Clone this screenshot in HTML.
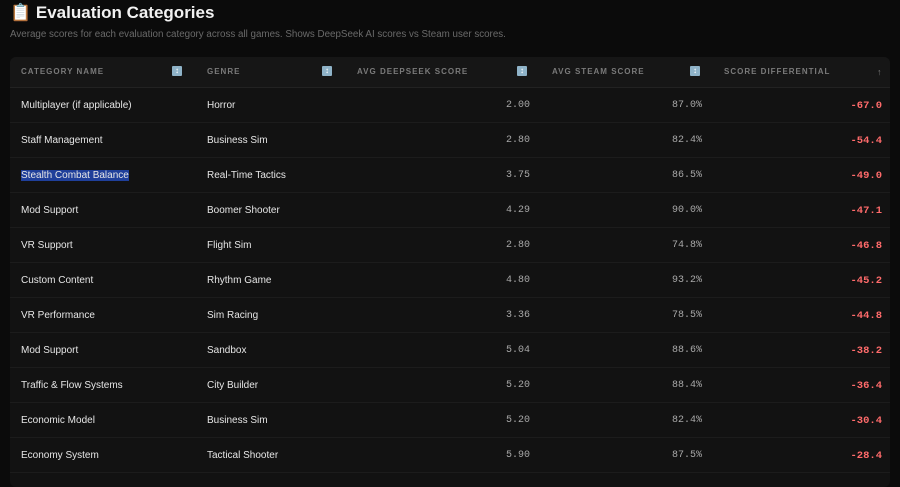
<!DOCTYPE html>
<html><head><style>
body{margin:0;background:#0b0b0b;width:900px;height:474px;overflow:hidden;font-family:"Liberation Sans",sans-serif;color:#e6e6e6}
h1{position:absolute;left:10px;top:0;margin:0;font-size:17px;line-height:25px;font-weight:bold;color:#f2f2f2}
.sub{position:absolute;left:10px;top:29px;font-size:9.8px;color:#6a6a6a}
.tbl{position:absolute;left:10px;top:57px;width:880px;height:430px;background:#121212;border-radius:6px;overflow:hidden}
.hd{position:absolute;left:0;top:0;width:880px;height:30px;background:#161616;border-bottom:1px solid #222}
.hd span{position:absolute;top:10px;font-size:8px;letter-spacing:1px;color:#7a7a7a;font-weight:bold}
.ic{position:absolute;top:9px;width:10px;height:10px;background:#8fb3c8;border-radius:1px;color:#fff;font-size:8px;line-height:10px;text-align:center}
.row{position:absolute;left:0;width:880px;height:35px;border-bottom:1px solid #1c1c1c;font-size:10px}
.row div{position:absolute;top:13px}
.m{font-family:"Liberation Mono",monospace;color:#a8a8a8;font-size:10px}
.r{font-family:"Liberation Mono",monospace;color:#ff6b6b;font-weight:bold;font-size:10.5px}
.sel{background:#1f3f9a}
</style></head><body>
<h1>📋 Evaluation Categories</h1>
<div class="sub">Average scores for each evaluation category across all games. Shows DeepSeek AI scores vs Steam user scores.</div>
<div class="tbl">
<div class="hd">
<span style="left:11px">CATEGORY NAME</span><div class="ic" style="left:162px">↕</div>
<span style="left:197px">GENRE</span><div class="ic" style="left:312px">↕</div>
<span style="left:347px">AVG DEEPSEEK SCORE</span><div class="ic" style="left:507px">↕</div>
<span style="left:542px">AVG STEAM SCORE</span><div class="ic" style="left:680px">↕</div>
<span style="left:714px">SCORE DIFFERENTIAL</span><span style="left:867px;font-size:9px">↑</span>
</div>
</div>
<div style="position:absolute;left:10px;top:87px">
<div class="row" style="top:0"><div style="left:11px">Multiplayer (if applicable)</div><div style="left:197px">Horror</div><div class="m" style="right:360px">2.00</div><div class="m" style="right:188px">87.0%</div><div class="r" style="right:8px">-67.0</div></div>
<div class="row" style="top:35px"><div style="left:11px">Staff Management</div><div style="left:197px">Business Sim</div><div class="m" style="right:360px">2.80</div><div class="m" style="right:188px">82.4%</div><div class="r" style="right:8px">-54.4</div></div>
<div class="row" style="top:70px"><div style="left:11px" class="sel">Stealth Combat Balance</div><div style="left:197px">Real-Time Tactics</div><div class="m" style="right:360px">3.75</div><div class="m" style="right:188px">86.5%</div><div class="r" style="right:8px">-49.0</div></div>
<div class="row" style="top:105px"><div style="left:11px">Mod Support</div><div style="left:197px">Boomer Shooter</div><div class="m" style="right:360px">4.29</div><div class="m" style="right:188px">90.0%</div><div class="r" style="right:8px">-47.1</div></div>
<div class="row" style="top:140px"><div style="left:11px">VR Support</div><div style="left:197px">Flight Sim</div><div class="m" style="right:360px">2.80</div><div class="m" style="right:188px">74.8%</div><div class="r" style="right:8px">-46.8</div></div>
<div class="row" style="top:175px"><div style="left:11px">Custom Content</div><div style="left:197px">Rhythm Game</div><div class="m" style="right:360px">4.80</div><div class="m" style="right:188px">93.2%</div><div class="r" style="right:8px">-45.2</div></div>
<div class="row" style="top:210px"><div style="left:11px">VR Performance</div><div style="left:197px">Sim Racing</div><div class="m" style="right:360px">3.36</div><div class="m" style="right:188px">78.5%</div><div class="r" style="right:8px">-44.8</div></div>
<div class="row" style="top:245px"><div style="left:11px">Mod Support</div><div style="left:197px">Sandbox</div><div class="m" style="right:360px">5.04</div><div class="m" style="right:188px">88.6%</div><div class="r" style="right:8px">-38.2</div></div>
<div class="row" style="top:280px"><div style="left:11px">Traffic &amp; Flow Systems</div><div style="left:197px">City Builder</div><div class="m" style="right:360px">5.20</div><div class="m" style="right:188px">88.4%</div><div class="r" style="right:8px">-36.4</div></div>
<div class="row" style="top:315px"><div style="left:11px">Economic Model</div><div style="left:197px">Business Sim</div><div class="m" style="right:360px">5.20</div><div class="m" style="right:188px">82.4%</div><div class="r" style="right:8px">-30.4</div></div>
<div class="row" style="top:350px"><div style="left:11px">Economy System</div><div style="left:197px">Tactical Shooter</div><div class="m" style="right:360px">5.90</div><div class="m" style="right:188px">87.5%</div><div class="r" style="right:8px">-28.4</div></div>
</div>
</body></html>
